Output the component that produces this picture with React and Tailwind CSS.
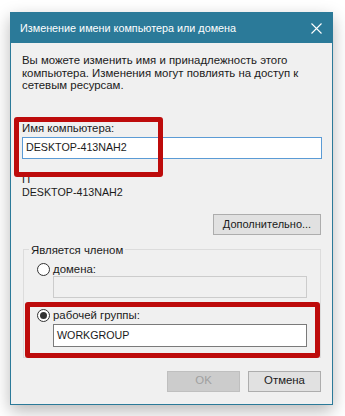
import React from "react";

const font = { fontFamily: '"Liberation Sans", Arial, sans-serif' };

function Radio({ checked }) {
  return (
    <span className="relative flex h-[13px] w-[13px] shrink-0 items-center justify-center rounded-full border border-[#333333] bg-white">
      {checked && <span className="h-[7px] w-[7px] rounded-full bg-[#333333]" />}
    </span>
  );
}

export default function App() {
  return (
    <div className="h-[416px] w-[345px] bg-white pl-[10px] pt-[12px]" style={font}>
      <div className="relative flex w-[323px] flex-col border border-[#2b7a99] bg-[#f0f0f0] text-[11.4px] text-[#1a1a1a] shadow-[0_6px_16px_rgba(0,0,0,0.28)]">
        {/* title bar */}
        <div className="flex h-[30px] items-center justify-between bg-[#2b7a99] pl-[9px] pr-[10px]">
          <span className="text-[10.8px] leading-none text-white">Изменение имени компьютера или домена</span>
          <svg width="11" height="11" viewBox="0 0 11 11">
            <path d="M0.5 0.5 L10.5 10.5 M10.5 0.5 L0.5 10.5" stroke="white" strokeWidth="1.1" />
          </svg>
        </div>

        {/* body */}
        <div className="flex flex-col pl-[11px] pr-[10px] pb-[12px]">
          <p className="mt-[11px] leading-[12.5px]">
            Вы можете изменить имя и принадлежность этого
            <br />
            компьютера. Изменения могут повлиять на доступ к
            <br />
            сетевым ресурсам.
          </p>

          <div className="mt-[30px] h-[13px] leading-[13px]">Имя компьютера:</div>
          <div className="mt-[2px] flex h-[22px] items-center border border-[#5b9bd5] bg-white pl-[3px] text-[10.7px] leading-none">
            DESKTOP-413NAH2
          </div>

          <div className="mt-[14px] flex h-[13px] leading-[13px]">
            <span>П</span>
          </div>
          <div className="h-[13px] text-[10.7px] leading-[13px]">DESKTOP-413NAH2</div>

          <div className="mt-[15px] flex justify-end pr-[1px]">
            <div className="flex h-[21px] w-[108px] items-center justify-center border border-[#adadad] bg-[#e1e1e1] text-[11px] leading-none">
              Дополнительно...
            </div>
          </div>

          <fieldset className="mx-[1px] mt-[9px] border border-[#dcdcdc] pb-[10px]">
            <legend className="ml-[5px] px-[2px] leading-[12px]">Является членом</legend>
            <div className="mt-[7px] ml-[13px] flex h-[13px] items-center gap-[3px] leading-[13px]">
              <Radio />
              <span>домена:</span>
            </div>
            <div className="ml-[29px] mr-[13px] h-[22px] border border-[#cccccc] bg-[#f0f0f0]" />
            <div className="mt-[11px] ml-[13px] flex h-[13px] items-center gap-[3px] leading-[13px]">
              <Radio checked />
              <span>рабочей группы:</span>
            </div>
            <div className="ml-[29px] mr-[13px] mt-[2px] flex h-[23px] items-center border border-[#7a7a7a] bg-white pl-[3px] text-[10.7px] leading-none">
              WORKGROUP
            </div>
          </fieldset>

          <div className="mt-[13px] flex justify-end gap-[8px] pr-[1px]">
            <div className="flex h-[21px] w-[73px] items-center justify-center border border-[#bfbfbf] bg-[#cccccc] leading-none text-[#a0a0a0]">
              OK
            </div>
            <div className="flex h-[21px] w-[73px] items-center justify-center border border-[#adadad] bg-[#e1e1e1] leading-none">
              Отмена
            </div>
          </div>
        </div>

        {/* annotation overlays */}
        <div className="pointer-events-none absolute left-[3px] top-[104px] h-[60px] w-[149px] rounded-[3px] border-[5px] border-[#bd0b0b]" />
        <div className="pointer-events-none absolute left-[14px] top-[289px] h-[56px] w-[295px] rounded-[3px] border-[5px] border-[#bd0b0b]" />
      </div>
    </div>
  );
}
